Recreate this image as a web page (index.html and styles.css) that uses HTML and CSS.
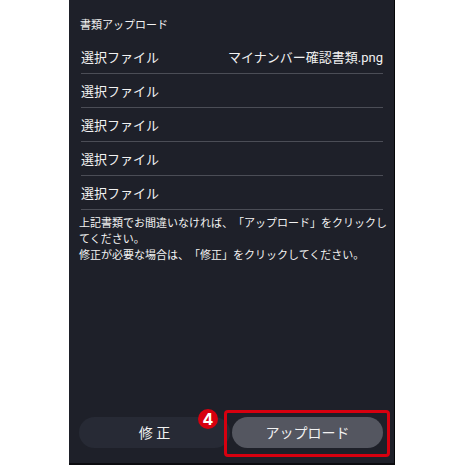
FILE: index.html
```html
<!DOCTYPE html>
<html lang="ja">
<head>
    <meta charset="UTF-8">
    <meta name="viewport" content="width=device-width, initial-scale=1.0">
    <title>書類アップロード</title>
    <link rel="stylesheet" href="styles.css">
</head>
<body>
    <main class="panel">
        <h1 class="title">書類アップロード</h1>

        <form class="upload-form">
            <div class="file-list">
                <label class="file-row">
                    <span>選択ファイル</span>
                    <span class="file-name">マイナンバー確認書類.png</span>
                    <input type="file" class="file-input">
                </label>
                <label class="file-row">
                    <span>選択ファイル</span>
                    <input type="file" class="file-input">
                </label>
                <label class="file-row">
                    <span>選択ファイル</span>
                    <input type="file" class="file-input">
                </label>
                <label class="file-row">
                    <span>選択ファイル</span>
                    <input type="file" class="file-input">
                </label>
                <label class="file-row">
                    <span>選択ファイル</span>
                    <input type="file" class="file-input">
                </label>
            </div>

            <p class="note">上記書類でお間違いなければ、「アップロード」をクリックしてください。<br>修正が必要な場合は、「修正」をクリックしてください。</p>

            <div class="actions">
                <button type="button" class="btn btn-edit">修 正</button>
                <div class="highlight">
                    <button type="button" class="btn btn-upload">アップロード</button>
                    <span class="step-badge">4</span>
                </div>
            </div>
        </form>
    </main>
</body>
</html>
```

FILE: styles.css
```css
* {
    margin: 0;
    padding: 0;
    box-sizing: border-box;
}

body {
    background: #ffffff;
    font-family: Roboto, "Noto Sans CJK JP", sans-serif;
    color: #f2f2f2;
}

.panel {
    display: flex;
    flex-direction: column;
    min-height: 100vh;
    margin: 0 70px 0 69px;
    padding: 18px 6px 15px 10px;
    background: #1e2029;
    border-right: 1px solid #050507;
    border-bottom: 2px solid #0c0c10;
}

.title {
    font-size: 11px;
    font-weight: 400;
    line-height: 16px;
    padding-left: 1px;
}

.upload-form {
    flex: 1;
    display: flex;
    flex-direction: column;
}

.file-list {
    margin: 6px 5px 0 2px;
}

.file-row {
    position: relative;
    display: flex;
    justify-content: space-between;
    align-items: center;
    height: 34px;
    border-bottom: 1px solid #4b4d56;
    font-size: 13px;
    cursor: pointer;
}

/* the whole row opens the file picker */
.file-input {
    position: absolute;
    inset: 0;
    width: 100%;
    opacity: 0;
    cursor: pointer;
}

.note {
    margin-top: 6px;
    font-size: 11px;
    line-height: 16px;
    text-spacing-trim: space-all;
}

.actions {
    display: grid;
    grid-template-columns: 1fr 1fr;
    gap: 2px;
    margin-top: auto;
    padding-right: 5px;
}

.btn {
    display: block;
    width: 100%;
    height: 31px;
    padding-bottom: 2px;
    border: none;
    border-radius: 16px;
    color: #f2f2f2;
    font-family: inherit;
    font-size: 14px;
    cursor: pointer;
}

.btn-edit {
    background: #272a35;
}

.btn-upload {
    background: #545660;
}

.highlight {
    position: relative;
}

.highlight::after {
    content: '';
    position: absolute;
    inset: -7px -7px -9px -8px;
    border: 3px solid #d7000f;
    border-radius: 4px;
    pointer-events: none;
}

.step-badge {
    position: absolute;
    top: -8px;
    left: -34px;
    width: 20px;
    height: 20px;
    border-radius: 50%;
    background: #d7000f;
    color: #ffffff;
    font-family: Inter, sans-serif;
    font-size: 16px;
    font-weight: 700;
    line-height: 20px;
    text-align: center;
}
```
